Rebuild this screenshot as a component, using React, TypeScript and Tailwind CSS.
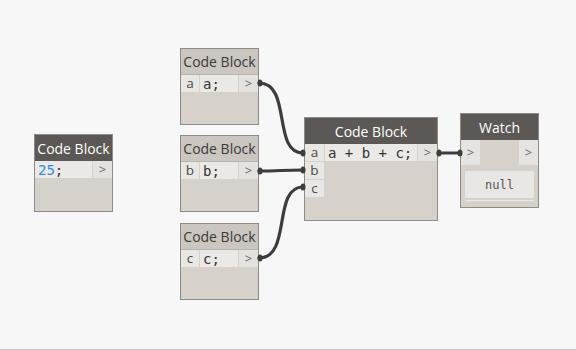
import React from "react";

const sans = { fontFamily: '"Open Sans", "Noto Sans", sans-serif' };

function Node({
  pos,
  title,
  dark,
  children,
}: {
  pos: string;
  title: string;
  dark?: boolean;
  children?: React.ReactNode;
}) {
  return (
    <div
      className={`absolute ${pos} border border-[#8e8a85] bg-[#d6d2cb] flex flex-col overflow-hidden`}
    >
      <div
        className={`h-[26px] shrink-0 flex items-center justify-center text-[14px] font-['Open_Sans',sans-serif] ${
          dark ? "bg-[#5b5855] text-white" : "bg-[#cbc6bf] text-[#3a3a3a] border-b border-[#b8b3ac]"
        }`}
      >
        {title}
      </div>
      {children}
    </div>
  );
}

const Port = ({ label }: { label: string }) => (
  <div className="w-[18px] h-[17px] shrink-0 bg-[#e9e7e3] flex items-center justify-center text-[13.5px] text-[#4a4a4a] font-['Open_Sans',sans-serif] leading-none">
    {label}
  </div>
);

const Out = () => (
  <div className="w-[19px] h-[17px] shrink-0 bg-[#e4e2de] flex items-center justify-center text-[13px] text-[#6a6a6a] font-['Open_Sans',sans-serif] leading-none">
    &gt;
  </div>
);

const Code = ({ children }: { children: React.ReactNode }) => (
  <div className="flex-1 h-[17px] bg-[#ebe9e6] flex items-center pl-[3px] text-[14px] text-[#333] font-['DejaVu_Sans_Mono',monospace] leading-none whitespace-pre">
    {children}
  </div>
);

export default function App() {
  return (
    <div
      className="relative w-[576px] h-[350px] bg-[#f7f7f7] border-b border-[#c4c4c4] overflow-hidden"
      style={sans}
    >
      {/* 25; */}
      <Node pos="left-[34px] top-[134px] w-[79px] h-[78px]" title="Code Block" dark>
        <div className="flex gap-px">
          <Code>
            <span className="text-[#2f8ce8]">25</span>;
          </Code>
          <Out />
        </div>
      </Node>

      {/* a */}
      <Node pos="left-[180px] top-[48px] w-[79px] h-[77px]" title="Code Block">
        <div className="flex gap-px">
          <Port label="a" />
          <Code>a;</Code>
          <Out />
        </div>
      </Node>

      {/* b */}
      <Node pos="left-[180px] top-[135px] w-[79px] h-[77px]" title="Code Block">
        <div className="flex gap-px">
          <Port label="b" />
          <Code>b;</Code>
          <Out />
        </div>
      </Node>

      {/* c */}
      <Node pos="left-[180px] top-[223px] w-[79px] h-[77px]" title="Code Block">
        <div className="flex gap-px">
          <Port label="c" />
          <Code>c;</Code>
          <Out />
        </div>
      </Node>

      {/* main */}
      <Node pos="left-[304px] top-[117px] w-[134px] h-[104px]" title="Code Block" dark>
        <div className="flex gap-px">
          <div className="w-[19px] h-[17px] shrink-0 bg-[#e9e7e3] flex items-center justify-center text-[13.5px] text-[#4a4a4a] leading-none">a</div>
          <Code>a + b + c;</Code>
          <Out />
        </div>
        <div className="flex flex-col gap-px mt-px">
          <div className="w-[19px] h-[17px] bg-[#e9e7e3] flex items-center justify-center text-[13.5px] text-[#4a4a4a] leading-none">b</div>
          <div className="w-[19px] h-[17px] bg-[#e9e7e3] flex items-center justify-center text-[13.5px] text-[#4a4a4a] leading-none">c</div>
        </div>
      </Node>

      {/* watch */}
      <Node pos="left-[460px] top-[113px] w-[79px] h-[95px]" title="Watch" dark>
        <div className="flex justify-between h-[25px]">
          <div className="w-[19px] h-[25px] bg-[#e6e4e0] flex items-center justify-center text-[13px] text-[#6a6a6a] leading-none">&gt;</div>
          <div className="w-[19px] h-[25px] bg-[#e6e4e0] flex items-center justify-center text-[13px] text-[#6a6a6a] leading-none">&gt;</div>
        </div>
        <div className="mx-[4px] mt-[6px] h-[27px] bg-[#e9e7e3] flex items-center justify-center text-[12px] text-[#555] font-['DejaVu_Sans_Mono',monospace]">
          null
        </div>
        <div className="mx-[4px] mt-[2px] h-px bg-[#ebe9e6]" />
      </Node>

      {/* wires */}
      <svg className="absolute inset-0 w-[576px] h-[350px] pointer-events-none" viewBox="0 0 576 350">
        <g stroke="#3d3d3d" strokeWidth="3.2" fill="none" strokeLinecap="round">
          <path d="M259 83 C 292 83 272 153 303 153" />
          <path d="M259 171 C 280 171 282 170 303 170" />
          <path d="M259 258 C 292 258 272 187 303 187" />
          <path d="M438 153 L 460 153" />
        </g>
        <g fill="#3d3d3d">
          <ellipse cx="260" cy="83" rx="2.5" ry="3.5" />
          <ellipse cx="260" cy="171" rx="2.5" ry="3.5" />
          <ellipse cx="260" cy="258" rx="2.5" ry="3.5" />
          <ellipse cx="303" cy="153" rx="2.5" ry="3.5" />
          <ellipse cx="303" cy="170" rx="2.5" ry="3.5" />
          <ellipse cx="303" cy="187" rx="2.5" ry="3.5" />
          <ellipse cx="439" cy="153" rx="2.5" ry="3.5" />
          <ellipse cx="460" cy="153" rx="2.5" ry="3.5" />
        </g>
      </svg>
    </div>
  );
}
